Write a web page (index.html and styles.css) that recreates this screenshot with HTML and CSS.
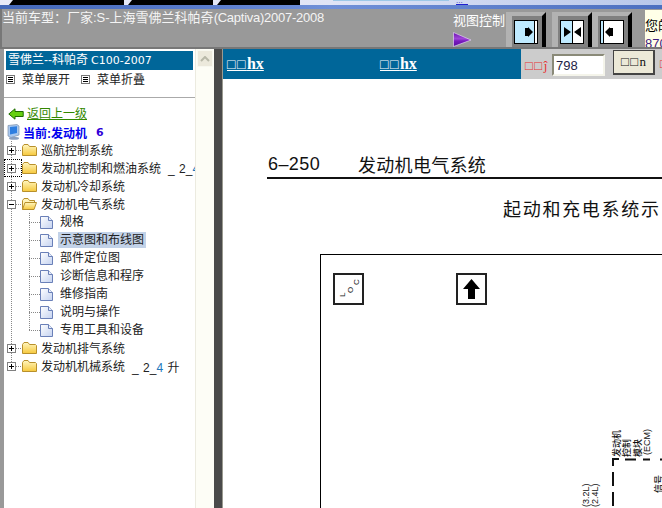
FILE: index.html
```html
<!DOCTYPE html>
<html lang="zh">
<head>
<meta charset="utf-8">
<title>发动机电气系统</title>
<link rel="stylesheet" href="styles.css">
</head>
<body>
<svg class="defs" width="0" height="0" aria-hidden="true">
  <defs>
    <linearGradient id="fold" x1="0" y1="0" x2="0" y2="1"><stop offset="0" stop-color="#fff6c0"/><stop offset="1" stop-color="#f6c83c"/></linearGradient>
    <linearGradient id="page" x1="0" y1="0" x2="1" y2="1"><stop offset="0" stop-color="#ffffff"/><stop offset="1" stop-color="#c4d2f0"/></linearGradient>
    <linearGradient id="tri" x1="0" y1="0" x2="0" y2="1"><stop offset="0" stop-color="#6a10b0"/><stop offset=".45" stop-color="#a048d8"/><stop offset=".6" stop-color="#7a1cc0"/><stop offset="1" stop-color="#5a0ca0"/></linearGradient>
    <symbol id="folder" viewBox="0 0 15 12">
      <path d="M.5 2.500 2 .5h4l1.500 2h6l1 1v8h-14z" fill="url(#fold)" stroke="#b8902c"/>
    </symbol>
    <symbol id="folder-open" viewBox="0 0 15 12">
      <path d="M.5 11.500v-9L2 .5h4l1.500 2h5v2" fill="#fff3b8" stroke="#b8902c"/>
      <path d="M.5 11.500l2.500-7h11.500l-2.500 7z" fill="url(#fold)" stroke="#b8902c"/>
    </symbol>
    <symbol id="doc" viewBox="0 0 13 13">
      <path d="M.5.5h8l4 4v8H.5z" fill="url(#page)" stroke="#6a80b8"/>
      <path d="M8.500.5v4h4" fill="#e8eefa" stroke="#6a80b8"/>
    </symbol>
    <symbol id="plus" viewBox="0 0 9 9">
      <rect x=".5" y=".5" width="8" height="8" fill="#fff" stroke="#808080"/>
      <path d="M2 4.500h5M4.500 2v5" stroke="#000"/>
    </symbol>
    <symbol id="minus" viewBox="0 0 9 9">
      <rect x=".5" y=".5" width="8" height="8" fill="#fff" stroke="#808080"/>
      <path d="M2 4.500h5" stroke="#000"/>
    </symbol>
    <symbol id="menu" viewBox="0 0 9 9">
      <rect x=".5" y=".5" width="8" height="8" fill="#fff" stroke="#777"/>
      <path d="M2 2.500h5M2 4.500h5M2 6.500h5" stroke="#000"/>
    </symbol>
    <symbol id="btn" viewBox="0 0 40 35">
      <rect width="40" height="35" fill="#b2b2b2"/>
      <rect x="6" y="4" width="30" height="31" fill="#808080"/>
      <path d="M36 4l4-4v35h-4z" fill="#000"/>
    </symbol>
  </defs>
</svg>

<div class="tabs">
  <span class="tab tab-a"></span>
  <span class="tab tab-b"></span>
  <span class="tab tab-c"></span>
  <span class="tab-bar"></span>
  <span class="tab-link">...</span>
</div>
<div class="band"></div>

<header class="head">
  <div class="model">当前车型：厂家:S-上海雪佛兰科帕奇<span class="model-latin">(Captiva)2007-2008</span></div>
  <div class="view">
    <div class="view-label">视图控制</div>
    <svg class="view-tri" width="19" height="15" viewBox="0 0 19 15"><path d="M.5.5 18 8 .5 14.500z" fill="url(#tri)" stroke="#f0e0ff" stroke-width=".6"/></svg>
  </div>
  <svg class="vbtn vbtn-first" width="40" height="35" viewBox="0 0 40 35">
    <use href="#btn"/>
    <rect x="8.500" y="8.500" width="23" height="23" fill="#bfeaff" stroke="#000"/>
    <rect x="28" y="9" width="3" height="22" fill="#fff"/><path d="M28.500 9v22" stroke="#000"/>
    <path d="M19 16h3v-1l5 5-5 5v-1h-3z" fill="#000"/>
  </svg>
  <svg class="vbtn vbtn-second" width="40" height="35" viewBox="0 0 40 35">
    <use href="#btn"/>
    <rect x="8.500" y="8.500" width="23" height="23" fill="#fff" stroke="#000"/>
    <rect x="9" y="9" width="11" height="22" fill="#bfeaff"/><path d="M20.500 9v22" stroke="#000"/>
    <path d="M12 15l7 5-7 5zM29 15l-7 5 7 5z" fill="#000"/>
  </svg>
  <svg class="vbtn" width="40" height="35" viewBox="0 0 40 35">
    <use href="#btn"/>
    <rect x="8.500" y="8.500" width="23" height="23" fill="#fff" stroke="#000"/>
    <rect x="9" y="9" width="2" height="22" fill="#bfeaff"/><path d="M11.500 9v22" stroke="#000"/>
    <path d="M21 16h-3v-1l-5 5 5 5v-1h3z" fill="#000"/>
  </svg>
  <div class="user">
    <div class="user-a">您的</div>
    <div class="user-b">870</div>
  </div>
</header>
<div class="head-rule"></div>

<main class="main">
  <aside class="side">
    <div class="side-body">
      <div class="side-title">雪佛兰--科帕奇<span class="side-code">C100-2007</span></div>
      <div class="side-menu">
        <svg class="menu-icon" width="9" height="9"><use href="#menu"/></svg><span class="menu-text">菜单展开</span>
        <svg class="menu-icon" width="9" height="9"><use href="#menu"/></svg><span class="menu-text">菜单折叠</span>
      </div>
      <div class="side-back">
        <svg class="back-icon" width="16" height="12" viewBox="0 0 16 12"><path d="M.8 6 7 .8V3.500h8.200v5H7v2.700z" fill="#66d010" stroke="#1e6a00"/></svg>
        <a class="back-link">返回上一级</a>
      </div>
      <div class="side-current">
        <svg class="pc-icon" width="13" height="16" viewBox="0 0 13 16">
          <path d="M1 1.500 10 .5l2 1.500v9l-8 2.500L1 12z" fill="#a8c8f0" stroke="#8090a8" stroke-width=".7"/>
          <path d="M3 3l7-.7v6.700l-7 1.400z" fill="#2e7ee0"/>
          <ellipse cx="7" cy="14.200" rx="5" ry="1.500" fill="#8aa0c0"/>
        </svg>
        <span class="current-text">当前:发动机</span><span class="current-num">6</span>
      </div>
      <ul class="tree">
        <li class="row trunk"><span class="exp"><svg width="9" height="9"><use href="#plus"/></svg></span><svg class="folder" width="15" height="12"><use href="#folder"/></svg><span class="label">巡航控制系统</span></li>
        <li class="row trunk"><span class="exp focus"><svg width="9" height="9"><use href="#plus"/></svg></span><svg class="folder" width="15" height="12"><use href="#folder"/></svg><span class="label">发动机控制和燃油系统</span><span class="suffix">_ 2_<i class="blue">4</i></span></li>
        <li class="row trunk"><span class="exp"><svg width="9" height="9"><use href="#plus"/></svg></span><svg class="folder" width="15" height="12"><use href="#folder"/></svg><span class="label">发动机冷却系统</span></li>
        <li class="row trunk"><span class="exp"><svg width="9" height="9"><use href="#minus"/></svg></span><svg class="folder" width="15" height="12"><use href="#folder-open"/></svg><span class="label">发动机电气系统</span></li>
        <li class="row leaf"><svg class="doc" width="13" height="13"><use href="#doc"/></svg><span class="leaf-label">规格</span></li>
        <li class="row leaf"><svg class="doc" width="13" height="13"><use href="#doc"/></svg><span class="leaf-label selected">示意图和布线图</span></li>
        <li class="row leaf"><svg class="doc" width="13" height="13"><use href="#doc"/></svg><span class="leaf-label">部件定位图</span></li>
        <li class="row leaf"><svg class="doc" width="13" height="13"><use href="#doc"/></svg><span class="leaf-label">诊断信息和程序</span></li>
        <li class="row leaf"><svg class="doc" width="13" height="13"><use href="#doc"/></svg><span class="leaf-label">维修指南</span></li>
        <li class="row leaf"><svg class="doc" width="13" height="13"><use href="#doc"/></svg><span class="leaf-label">说明与操作</span></li>
        <li class="row leaf leaf-end"><svg class="doc" width="13" height="13"><use href="#doc"/></svg><span class="leaf-label">专用工具和设备</span></li>
        <li class="row trunk"><span class="exp"><svg width="9" height="9"><use href="#plus"/></svg></span><svg class="folder" width="15" height="12"><use href="#folder"/></svg><span class="label">发动机排气系统</span></li>
        <li class="row trunk-end"><span class="exp"><svg width="9" height="9"><use href="#plus"/></svg></span><svg class="folder" width="15" height="12"><use href="#folder"/></svg><span class="label">发动机机械系统</span><span class="suffix">_ 2_<i class="blue">4</i> 升</span></li>
      </ul>
    </div>
    <div class="scroll">
      <div class="scroll-up"><svg width="10" height="6" viewBox="0 0 10 6"><path d="M1 5l4-4 4 4" fill="none" stroke="#b8b8a8" stroke-width="2"/></svg></div>
    </div>
  </aside>
  <div class="sash"></div>
  <section class="doc-pane">
    <div class="doc-bar">
      <a class="bar-link bar-link-a"><span class="tofu">□□</span>hx</a>
      <a class="bar-link bar-link-b"><span class="tofu">□□</span>hx</a>
      <form class="jump">
        <span class="jump-label"><span class="tofu-small">□□</span>ĵ</span>
        <input class="jump-input" value="798">
        <span class="jump-btn"><span class="tofu-small">□□</span>n</span>
        <span class="jump-tail">□</span>
      </form>
    </div>
    <div class="sheet">
      <div class="sheet-head"><span class="sheet-page">6–250</span><span class="sheet-title">发动机电气系统</span></div>
      <h2 class="sheet-sub">起动和充电系统示</h2>
      <div class="diagram">
        <div class="marks">
          <svg class="mark" width="31" height="32" viewBox="0 0 31 32">
            <rect x="1" y="1" width="29" height="30" fill="#fff" stroke="#222" stroke-width="2"/>
            <text class="loc" x="12 20 26" y="24 20 12" rotate="-90 -90 -90">LOC</text>
          </svg>
          <svg class="mark" width="31" height="32" viewBox="0 0 31 32">
            <rect x="1" y="1" width="29" height="30" fill="#fff" stroke="#222" stroke-width="2"/>
            <path d="M15.500 6 24 16h-5v10h-7V16H7z" fill="#000"/>
          </svg>
        </div>
        <svg class="wiring" width="342" height="252" viewBox="321 256 342 252">
          <g class="wire-text">
            <text transform="translate(620 458) rotate(-90)">发动机</text>
            <text transform="translate(630 458) rotate(-90)">控制</text>
            <text transform="translate(641 458) rotate(-90)">模块</text>
            <text class="wire-latin" transform="translate(650 456) rotate(-90)">(ECM)</text>
            <text class="wire-latin" transform="translate(589 508) rotate(-90)">(3.2L)</text>
            <text class="wire-latin" transform="translate(598 508) rotate(-90)">(2.4L)</text>
            <text transform="translate(662 494) rotate(-90)">信号</text>
          </g>
          <path d="M613 467v-7h6M613 473v14M613 493v14M625 460.500h11M643 460.500h7M660 460.500h2" fill="none" stroke="#111" stroke-width="2"/>
        </svg>
      </div>
    </div>
  </section>
</main>
</body>
</html>
```
FILE: styles.css
```css
* { box-sizing: border-box; }
html, body { margin: 0; padding: 0; height: 100%; }
body {
  width: 662px;
  height: 508px;
  overflow: hidden;
  display: flex;
  flex-direction: column;
  background: #999;
  font-family: "Liberation Sans", "Noto Sans CJK SC", sans-serif;
  font-size: 12px;
}
.defs { position: absolute; }

/* top strip */
.tabs {
  flex: none;
  height: 5px;
  display: flex;
  background: linear-gradient(90deg, #e8eaf8 0%, #e0e4f6 50%, #b8c8ea 100%);
}
.tab { height: 5px; background: #000; clip-path: polygon(4px 0, 100% 0, 100% 100%, 0 100%); }
.tab-a { width: 115px; margin-left: 9px; }
.tab-b { width: 85px; margin-left: 4px; }
.tab-c { width: 83px; margin-left: 4px; }
.tab-bar { width: 116px; height: 1px; margin-left: 33px; background: #9cc8e8; }
.tab-link {
  margin-left: 7px;
  width: 12px;
  height: 5px;
  color: #3030c0;
  font: 8px/1px "Liberation Sans", sans-serif;
  border-bottom: 1px solid #2020d0;
  overflow: hidden;
}
.band {
  flex: none;
  height: 4px;
  background: linear-gradient(90deg, #4468b8 0%, #5a7ccc 30%, #7090d8 50%, #4c70c0 100%);
}

/* header */
.head {
  flex: none;
  height: 38px;
  display: flex;
  align-items: flex-end;
  background: #999;
  border-left: 2px solid #777;
  color: #fff;
  overflow: hidden;
}
.model {
  align-self: flex-start;
  width: 451px;
  font-size: 13px;
  line-height: 18px;
  color: #f4f4f4;
  white-space: nowrap;
}
.model-latin { letter-spacing: -.25px; }
.view { width: 53px; align-self: flex-start; margin-top: 3px; }
.view-label { font-size: 13px; line-height: 18px; white-space: nowrap; }
.view-tri { display: block; margin-top: 2px; }
.vbtn { display: block; flex: none; }
.vbtn-first { margin-right: 6px; }
.user {
  flex: none;
  width: 17px;
  height: 37px;
  margin-left: 13px;
  background: #ffffe8;
  color: #000;
  overflow: hidden;
  white-space: nowrap;
  font-size: 13px;
  line-height: 18px;
  padding-top: 7px;
}
.user-b { color: #402080; font-family: "Liberation Sans", sans-serif; margin-top: 0; }
.head-rule { flex: none; height: 2px; background: #777; }

/* layout */
.main { flex: 1; min-height: 0; display: flex; }
.side {
  flex: none;
  width: 214px;
  display: flex;
  background: #fff;
  border-left: 4px solid #999;
}
.side-body { width: 191px; overflow: hidden; }
.sash { flex: none; width: 9px; background: #4a4a4a; border-right: 1px solid #9a9a90; }
.doc-pane { flex: 1; min-width: 0; background: #fff; overflow: hidden; }

/* left panel */
.side-title {
  height: 19px;
  margin: 2px 2px 0;
  padding-left: 2px;
  background: #006699;
  color: #fff;
  line-height: 18px;
  white-space: nowrap;
}
.side-code { font: 11px/18px "DejaVu Sans", sans-serif; margin-left: 3px; }
.side-menu {
  height: 28px;
  display: flex;
  align-items: flex-start;
  padding: 1px 0 0 2px;
  border-bottom: 1px solid #aaa;
  color: #222;
  line-height: 18px;
}
.menu-icon { margin: 4px 7px 0 0; flex: none; }
.menu-text { margin-right: 11px; }
.side-back { height: 25px; display: flex; align-items: center; padding: 7px 0 0 4px; }
.back-icon { margin-right: 3px; }
.back-link { color: #338800; text-decoration: underline; line-height: 16px; }
.side-current { height: 18px; display: flex; align-items: center; padding-left: 3px; }
.pc-icon { flex: none; margin-right: 3px; }
.current-text { color: #0000ee; font-weight: 700; }
.current-num { margin-left: 9px; color: #3000d8; font: 700 11px "DejaVu Sans", sans-serif; }

/* tree */
.tree { list-style: none; margin: 0; padding: 0; color: #222; }
.row { height: 18px; display: flex; align-items: center; white-space: nowrap; }
.trunk { background: repeating-linear-gradient(180deg, #888 0 1px, transparent 1px 2px) 7px 0 / 1px 100% no-repeat; }
.trunk-end { background: repeating-linear-gradient(180deg, #888 0 1px, transparent 1px 2px) 7px 0 / 1px 9px no-repeat; }
.leaf, .leaf-end { padding-left: 36px; }
.leaf {
  background:
    repeating-linear-gradient(180deg, #888 0 1px, transparent 1px 2px) 7px 0 / 1px 100% no-repeat,
    repeating-linear-gradient(180deg, #888 0 1px, transparent 1px 2px) 25px 0 / 1px 100% no-repeat,
    repeating-linear-gradient(90deg, #888 0 1px, transparent 1px 2px) 25px 9px / 11px 1px no-repeat;
}
.leaf-end {
  background:
    repeating-linear-gradient(180deg, #888 0 1px, transparent 1px 2px) 7px 0 / 1px 100% no-repeat,
    repeating-linear-gradient(180deg, #888 0 1px, transparent 1px 2px) 25px 0 / 1px 9px no-repeat,
    repeating-linear-gradient(90deg, #888 0 1px, transparent 1px 2px) 25px 9px / 11px 1px no-repeat;
}
.exp {
  flex: none;
  width: 18px;
  height: 18px;
  display: flex;
  align-items: center;
  padding-left: 3px;
  background: repeating-linear-gradient(90deg, #888 0 1px, transparent 1px 2px) 12px 9px / 6px 1px no-repeat;
}
.exp svg { display: block; }
.focus { outline: 1px dotted #000; outline-offset: -1px; }
.folder { flex: none; margin-right: 4px; }
.label { line-height: 16px; padding-top: 1px; }
.suffix { margin-left: 7px; word-spacing: 1px; padding-top: 1px; }
.blue { font-style: normal; color: #2277bb; }
.doc { flex: none; margin-right: 5px; }
.leaf-label { padding: 0 2px; line-height: 17px; height: 16px; }
.selected { background: #c2d2e8; }

/* scrollbar */
.scroll {
  flex: none;
  width: 19px;
  padding: 1px 1px 0 1px;
  background: #fdfdf6;
  border-left: 1px solid #ecebe0;
}
.scroll-up {
  height: 17px;
  display: flex;
  align-items: center;
  justify-content: center;
  background: #ece9dc;
  border: 1px solid #f8f8f0;
}

/* doc bar */
.doc-bar {
  height: 30px;
  display: flex;
  align-items: center;
  background: #006699;
}
.bar-link {
  color: #fff;
  font: 700 16px/18px "Liberation Serif", serif;
  text-decoration: underline;
  white-space: nowrap;
}
.tofu { font-size: 14px; letter-spacing: 1.5px; }
.tofu-small { letter-spacing: 1.5px; }
.bar-link-a { margin-left: 4px; width: 153px; }
.bar-link-b { width: 141px; }
.jump {
  flex: 1;
  align-self: stretch;
  margin: 0;
  display: flex;
  align-items: center;
  background: #ccc;
  padding-left: 4px;
  overflow: hidden;
  white-space: nowrap;
}
.jump-label { width: 27px; flex: none; color: #e83030; font: 13px "Liberation Serif", serif; padding-top: 4px; }
.jump-input {
  flex: none;
  width: 53px;
  height: 22px;
  margin: 2px 0 0;
  padding: 0 2px;
  border: 2px solid;
  border-color: #8a8a78 #f4f4ea #f4f4ea #8a8a78;
  background: #fff;
  color: #224;
  font: 13px "Liberation Sans", sans-serif;
  outline: 0;
}
.jump-btn {
  flex: none;
  width: 42px;
  height: 25px;
  margin-left: 8px;
  margin-top: -3px;
  text-align: center;
  background: #ece9d8;
  border: 1px solid #444;
  border-width: 1px 2px 2px 1px;
  color: #111;
  font: 13px/21px "Liberation Serif", serif;
}
.jump-tail { margin-left: 5px; color: #e83030; font: 13px "Liberation Serif", serif; }

/* page */
.sheet { padding-top: 75px; }
.sheet-head {
  margin-left: 44px;
  height: 25px;
  display: flex;
  align-items: center;
  border-bottom: 2px solid #111;
  color: #111;
  font-size: 18px;
  white-space: nowrap;
}
.sheet-page { width: 91px; font: 18px "Liberation Sans", sans-serif; letter-spacing: .4px; padding: 0 0 2px 1px; }
.sheet-title { line-height: 22px; letter-spacing: .3px; }
.sheet-sub {
  margin: 18px 0 0 280px;
  font-size: 18px;
  font-weight: 400;
  line-height: 26px;
  letter-spacing: 1.7px;
  color: #111;
  white-space: nowrap;
}
.diagram {
  position: relative;
  margin: 31px 0 0 97px;
  width: 600px;
  height: 400px;
  border: 1px solid #000;
  background: #fff;
}
.marks { display: flex; gap: 92px; padding: 18px 0 0 12px; }
.mark { display: block; flex: none; }
.loc { font: 8px "Liberation Sans", sans-serif; fill: #111; }
.wiring { position: absolute; left: 0; top: 0; }
.wire-text text { font: 500 9px "Noto Sans CJK SC", sans-serif; fill: #111; }
.wire-text .wire-latin { font: 9px "Liberation Sans", sans-serif; }
```
